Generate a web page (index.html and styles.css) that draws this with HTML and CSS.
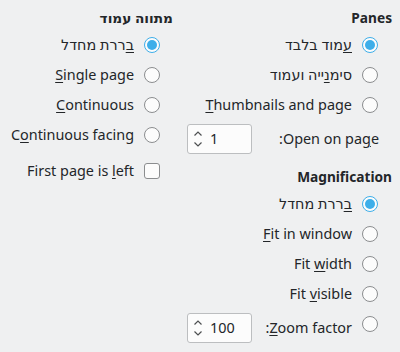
FILE: index.html
```html
<!DOCTYPE html>
<html dir="rtl" lang="he">
<head>
<meta charset="utf-8">
<link rel="stylesheet" href="styles.css">
</head>
<body>
<div class="page">
  <div class="col col-right">
    <div class="heading">Panes</div>
    <div class="row"><span class="radio checked"></span><span class="label"><u>ע</u>מוד בלבד</span></div>
    <div class="row"><span class="radio"></span><span class="label">סימ<u>נ</u>ייה ועמוד</span></div>
    <div class="row"><span class="radio"></span><span class="label" dir="ltr"><u>T</u>humbnails and page</span></div>
    <div class="spinrow">
      <span class="label" dir="ltr">:Open on pa<u>g</u>e</span>
      <span class="spin">
        <svg class="arrows" width="10" height="18" viewBox="0 0 10 18"><path d="M1.5 5.5 L5 2 L8.5 5.5 M1.5 12.5 L5 16 L8.5 12.5" fill="none" stroke="#4d4f51" stroke-width="1.2"/></svg>
        <span class="val">1</span>
      </span>
    </div>
    <div class="heading heading2">Magnification</div>
    <div class="row"><span class="radio checked"></span><span class="label"><u>ב</u>ררת מחדל</span></div>
    <div class="row"><span class="radio"></span><span class="label" dir="ltr"><u>F</u>it in window</span></div>
    <div class="row"><span class="radio"></span><span class="label" dir="ltr">Fit <u>w</u>idth</span></div>
    <div class="row"><span class="radio"></span><span class="label" dir="ltr">Fit <u>v</u>isible</span></div>
    <div class="row zoomrow">
      <span class="radio"></span>
      <span class="label" dir="ltr">:<u>Z</u>oom factor</span>
      <span class="spin">
        <svg class="arrows" width="10" height="18" viewBox="0 0 10 18"><path d="M1.5 5.5 L5 2 L8.5 5.5 M1.5 12.5 L5 16 L8.5 12.5" fill="none" stroke="#4d4f51" stroke-width="1.2"/></svg>
        <span class="val">100</span>
      </span>
    </div>
  </div>
  <div class="col col-left">
    <div class="heading">מתווה עמוד</div>
    <div class="row"><span class="radio checked"></span><span class="label"><u>ב</u>ררת מחדל</span></div>
    <div class="row"><span class="radio"></span><span class="label" dir="ltr"><u>S</u>ingle page</span></div>
    <div class="row"><span class="radio"></span><span class="label" dir="ltr"><u>C</u>ontinuous</span></div>
    <div class="row"><span class="radio"></span><span class="label" dir="ltr">C<u>o</u>ntinuous facing</span></div>
    <div class="row checkrow"><span class="check"></span><span class="label" dir="ltr">First page is <u>l</u>eft</span></div>
  </div>
</div>
</body>
</html>
```
FILE: styles.css
```css
html, body {
  margin: 0;
  padding: 0;
  background: #eff0f1;
}
body {
  font-family: "Noto Sans", "DejaVu Sans", sans-serif;
  font-size: 14.4px;
  color: #232629;
  width: 400px;
  height: 352px;
  overflow: hidden;
}
.page {
  display: flex;
  flex-direction: row;
  padding: 0 8px;
  gap: 14px;
}
.col {
  display: flex;
  flex-direction: column;
}
.col-right {
  width: 205px;
}
.col-left {
  flex: 1;
}
.heading {
  font-weight: bold;
  font-size: 13.7px;
  height: 24px;
  line-height: 24px;
  margin-top: 6px;
}
.heading2 {
  margin-top: 11px;
}
.row {
  display: flex;
  align-items: center;
  height: 30px;
  gap: 10px;
  padding-right: 14px;
}
.col-left .row {
  padding-right: 13px;
}
.label {
  white-space: nowrap;
  line-height: 30px;
}
u {
  text-decoration: underline;
  text-underline-offset: 2px;
  text-decoration-thickness: 1px;
}
.radio {
  box-sizing: border-box;
  width: 16px;
  height: 16px;
  border-radius: 50%;
  border: 1px solid #8b8d8f;
  background: #fcfcfc;
  flex: none;
  position: relative;
}
.radio.checked {
  border-color: #3daee9;
}
.radio.checked::after {
  content: "";
  position: absolute;
  left: 2px;
  top: 2px;
  width: 10px;
  height: 10px;
  border-radius: 50%;
  background: #3daee9;
}
.check {
  box-sizing: border-box;
  width: 16px;
  height: 16px;
  border-radius: 3px;
  border: 1px solid #8b8d8f;
  background: #fcfcfc;
  flex: none;
}
.checkrow {
  margin-top: 6px;
}
.spinrow {
  display: flex;
  align-items: center;
  justify-content: space-between;
  margin-top: 4px;
  height: 30px;
  padding-right: 13px;
}
.spin {
  box-sizing: border-box;
  width: 65px;
  height: 30px;
  border: 1px solid #bcbec0;
  border-radius: 3px;
  background: #fcfcfc;
  display: flex;
  direction: ltr;
  align-items: center;
  padding-left: 5px;
  gap: 7px;
  flex: none;
}
.arrows {
  display: block;
}
.val {
  line-height: 28px;
}
.zoomrow {
  align-items: flex-start;
  height: 34px;
  padding-right: 14px;
}
.zoomrow .radio {
  margin-top: 7px;
}
.zoomrow .label {
  margin-top: 4px;
}
.zoomrow .spin {
  margin-top: 4px;
  margin-right: auto;
}
```
